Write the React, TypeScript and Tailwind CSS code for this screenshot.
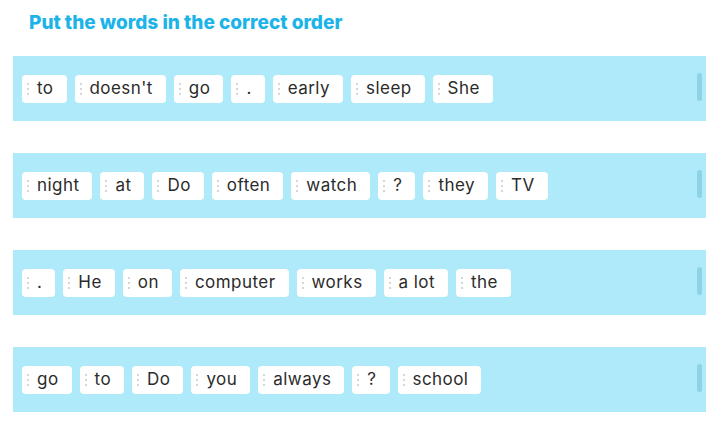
import React from 'react';

const rows: string[][] = [
    ['to', "doesn't", 'go', '.', 'early', 'sleep', 'She'],
    ['night', 'at', 'Do', 'often', 'watch', '?', 'they', 'TV'],
    ['.', 'He', 'on', 'computer', 'works', 'a lot', 'the'],
    ['go', 'to', 'Do', 'you', 'always', '?', 'school'],
];

const DragDots = () => (
    <span className="flex flex-col gap-[3px]">
        <span className="block w-[2px] h-[2px] rounded-full bg-[#c9c9c9]" />
        <span className="block w-[2px] h-[2px] rounded-full bg-[#c9c9c9]" />
        <span className="block w-[2px] h-[2px] rounded-full bg-[#c9c9c9]" />
    </span>
);

const WordChip = ({ word }: { word: string }) => (
    <div className="flex items-center gap-[8px] h-[28px] pl-[5px] pr-[13px] bg-white rounded-[4px]">
        <DragDots />
        <span className="text-[17px] leading-none tracking-[0.45px] text-[#2b2b2b] pb-[1px]">{word}</span>
    </div>
);

export default function App() {
    return (
        <div className="w-[706px] h-[435px] bg-white overflow-hidden" style={{ fontFamily: 'Inter, "Noto Sans", sans-serif' }}>
            <h1 className="pl-[29px] pt-[9px] h-[56px] text-[19px] font-extrabold tracking-[0px] text-[#1cb4e8]">
                Put the words in the correct order
            </h1>
            <div className="flex flex-col gap-[32px]">
                {rows.map((words, i) => (
                    <div key={i} className="relative ml-[13px] h-[65px] bg-[#aeeafa] flex items-center pl-[9px] gap-[8px]">
                        {words.map((w, j) => (
                            <WordChip key={j} word={w} />
                        ))}
                        <span className="absolute right-[4px] top-[17px] w-[5px] h-[28px] rounded-full bg-[#8fd3e6]" />
                    </div>
                ))}
            </div>
        </div>
    );
}
